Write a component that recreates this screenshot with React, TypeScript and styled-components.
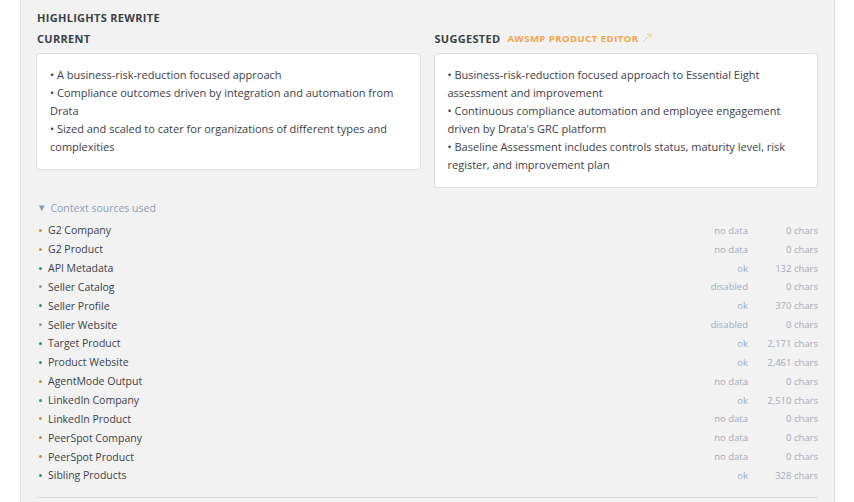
import styled, { createGlobalStyle } from 'styled-components';

const GlobalStyle = createGlobalStyle`
  html, body {
    margin: 0;
    padding: 0;
    background: #ffffff;
    font-family: 'Open Sans', 'Noto Sans', sans-serif;
    color: #3a3f47;
  }
`;

type SourceState = 'ok' | 'no data' | 'disabled';

interface Source {
  name: string;
  state: SourceState;
  chars: string;
}

const sources: Source[] = [
  { name: 'G2 Company', state: 'no data', chars: '0 chars' },
  { name: 'G2 Product', state: 'no data', chars: '0 chars' },
  { name: 'API Metadata', state: 'ok', chars: '132 chars' },
  { name: 'Seller Catalog', state: 'disabled', chars: '0 chars' },
  { name: 'Seller Profile', state: 'ok', chars: '370 chars' },
  { name: 'Seller Website', state: 'disabled', chars: '0 chars' },
  { name: 'Target Product', state: 'ok', chars: '2,171 chars' },
  { name: 'Product Website', state: 'ok', chars: '2,461 chars' },
  { name: 'AgentMode Output', state: 'no data', chars: '0 chars' },
  { name: 'LinkedIn Company', state: 'ok', chars: '2,510 chars' },
  { name: 'LinkedIn Product', state: 'no data', chars: '0 chars' },
  { name: 'PeerSpot Company', state: 'no data', chars: '0 chars' },
  { name: 'PeerSpot Product', state: 'no data', chars: '0 chars' },
  { name: 'Sibling Products', state: 'ok', chars: '328 chars' },
];

const dotColors: Record<SourceState, string> = {
  ok: '#1f9d55',
  'no data': '#e0892e',
  disabled: '#8f99ab',
};

const Panel = styled.section`
  box-sizing: border-box;
  width: 815px;
  margin-left: 20px;
  padding: 10px 16px 0 15px;
  background: #f2f2f2;
  border-left: 1px solid #e1e1e3;
  border-right: 1px solid #e1e1e3;
  min-height: 502px;
`;

const Title = styled.h2`
  margin: 0 0 0 1px;
  font-size: 11px;
  line-height: 16px;
  font-weight: 700;
  letter-spacing: 0.3px;
  text-transform: uppercase;
  color: #3a3f47;
`;

const Columns = styled.div`
  display: grid;
  grid-template-columns: 1fr 1fr;
  column-gap: 13px;
  align-items: start;
  margin-top: 4px;
`;

const Column = styled.div`
  display: flex;
  flex-direction: column;
`;

const ColumnHead = styled.div`
  display: flex;
  align-items: center;
  gap: 7px;
  height: 16px;
  margin: 0 0 7px 1px;
`;

const ColumnLabel = styled.span`
  font-size: 11px;
  font-weight: 700;
  letter-spacing: 0.3px;
  text-transform: uppercase;
  color: #3a3f47;
`;

const EditorLink = styled.span`
  display: inline-flex;
  align-items: center;
  gap: 3px;
  font-size: 9.5px;
  font-weight: 700;
  letter-spacing: 0.5px;
  text-transform: uppercase;
  color: #f4a245;
`;

const Card = styled.div`
  background: #ffffff;
  border: 1px solid #dedede;
  border-radius: 4px;
  padding: 12px 13px 13px;
  font-size: 11px;
  line-height: 18px;
  color: #3c4049;
`;

const Bullet = styled.div``;

const Summary = styled.div`
  display: flex;
  align-items: center;
  gap: 4px;
  margin: 12px 0 5px 1px;
  font-size: 10.5px;
  line-height: 16px;
  color: #8d9cb3;
`;

const Caret = styled.span`
  font-size: 9.5px;
  line-height: 1;
`;

const SourceList = styled.ul`
  list-style: none;
  margin: 0;
  padding: 0 0 12px;
  border-bottom: 1px solid #dcdcdc;
`;

const SourceRow = styled.li`
  display: grid;
  grid-template-columns: 1fr 80px 70px;
  align-items: center;
  height: 18.85px;
`;

const SourceName = styled.span`
  display: flex;
  align-items: center;
  gap: 6px;
  padding-left: 3px;
  font-size: 10.5px;
  color: #3c4049;
`;

const Dot = styled.span<{ $state: SourceState }>`
  width: 3px;
  height: 3px;
  border-radius: 50%;
  background: ${(p) => dotColors[p.$state]};
`;

const Meta = styled.span`
  text-align: right;
  font-size: 9.5px;
  color: #a2aabb;
`;

const ArrowIcon = () => (
  <svg width="10" height="10" viewBox="0 0 10 10" fill="none" stroke="#f7c48f" strokeWidth="0.9">
    <path d="M1 9 L9 1" />
    <path d="M5 1 H9 V5" />
  </svg>
);

const App = () => {
  return (
    <>
      <GlobalStyle />
      <Panel>
        <Title>Highlights Rewrite</Title>
        <Columns>
          <Column>
            <ColumnHead>
              <ColumnLabel>Current</ColumnLabel>
            </ColumnHead>
            <Card>
              <Bullet>• A business-risk-reduction focused approach</Bullet>
              <Bullet>• Compliance outcomes driven by integration and automation from Drata</Bullet>
              <Bullet>• Sized and scaled to cater for organizations of different types and complexities</Bullet>
            </Card>
          </Column>
          <Column>
            <ColumnHead>
              <ColumnLabel>Suggested</ColumnLabel>
              <EditorLink>
                AWSMP Product Editor <ArrowIcon />
              </EditorLink>
            </ColumnHead>
            <Card>
              <Bullet>• Business-risk-reduction focused approach to Essential Eight assessment and improvement</Bullet>
              <Bullet>• Continuous compliance automation and employee engagement driven by Drata's GRC platform</Bullet>
              <Bullet>• Baseline Assessment includes controls status, maturity level, risk register, and improvement plan</Bullet>
            </Card>
          </Column>
        </Columns>

        <Summary>
          <Caret>▼</Caret>
          Context sources used
        </Summary>
        <SourceList>
          {sources.map((s) => (
            <SourceRow key={s.name}>
              <SourceName>
                <Dot $state={s.state} />
                {s.name}
              </SourceName>
              <Meta>{s.state}</Meta>
              <Meta>{s.chars}</Meta>
            </SourceRow>
          ))}
        </SourceList>
      </Panel>
    </>
  );
};

export default App;
